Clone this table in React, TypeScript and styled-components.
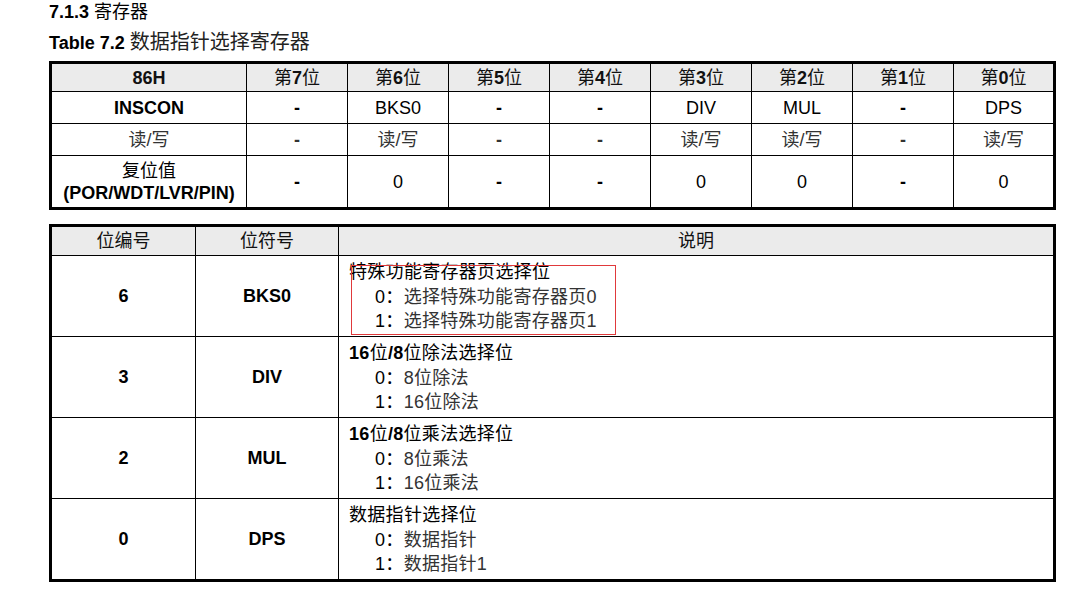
import React from 'react';
import styled, { createGlobalStyle } from 'styled-components';

const GlobalStyle = createGlobalStyle`
  body {
    margin: 0;
    background: #fff;
    font-family: "Liberation Sans", "Noto Sans CJK SC", sans-serif;
    color: #000;
  }
`;

const regHeader = ['第7位', '第6位', '第5位', '第4位', '第3位', '第2位', '第1位', '第0位'];
const regNames = ['-', 'BKS0', '-', '-', 'DIV', 'MUL', '-', 'DPS'];
const regAccess = ['-', '读/写', '-', '-', '读/写', '读/写', '-', '读/写'];
const regReset = ['-', '0', '-', '-', '0', '0', '-', '0'];

interface BitInfo {
  bit: string;
  name: string;
  title: React.ReactNode;
  options: [string, string][];
  marked?: boolean;
}

const bits: BitInfo[] = [
  {
    bit: '6',
    name: 'BKS0',
    title: '特殊功能寄存器页选择位',
    options: [['0', '选择特殊功能寄存器页0'], ['1', '选择特殊功能寄存器页1']],
    marked: true,
  },
  {
    bit: '3',
    name: 'DIV',
    title: (<><b>16</b>位<b>/8</b>位除法选择位</>),
    options: [['0', '8位除法'], ['1', '16位除法']],
  },
  {
    bit: '2',
    name: 'MUL',
    title: (<><b>16</b>位<b>/8</b>位乘法选择位</>),
    options: [['0', '8位乘法'], ['1', '16位乘法']],
  },
  {
    bit: '0',
    name: 'DPS',
    title: '数据指针选择位',
    options: [['0', '数据指针'], ['1', '数据指针1']],
  },
];

// digits in the header row are set bold, the CJK around them is not
function boldDigits(text: string) {
  return text.split(/(\d+)/).map((part, i) => (/\d/.test(part) ? <b key={i}>{part}</b> : part));
}

export default function App() {
  return (
    <Page>
      <GlobalStyle />
      <Heading><b>7.1.3</b> 寄存器</Heading>
      <Caption><b>Table 7.2</b> <CaptionText>数据指针选择寄存器</CaptionText></Caption>

      <RegTable>
        <colgroup>
          <col style={{ width: 196 }} />
          {regHeader.map((h) => <col key={h} />)}
        </colgroup>
        <tbody>
          <tr>
            <HeadCell $height={27}><b>86H</b></HeadCell>
            {regHeader.map((h) => <HeadCell key={h} $height={27}>{boldDigits(h)}</HeadCell>)}
          </tr>
          <tr>
            <Cell $height={31} $bold>INSCON</Cell>
            {regNames.map((v, i) => <Cell key={i} $height={31} $bold={v === '-'}>{v}</Cell>)}
          </tr>
          <tr>
            <Cell $height={31} $soft>读/写</Cell>
            {regAccess.map((v, i) => <Cell key={i} $height={31} $soft $bold={v === '-'}>{v}</Cell>)}
          </tr>
          <tr>
            <Cell $height={51}>
              复位值<br /><b>(POR/WDT/LVR/PIN)</b>
            </Cell>
            {regReset.map((v, i) => <Cell key={i} $height={51} $bold={v === '-'}>{v}</Cell>)}
          </tr>
        </tbody>
      </RegTable>

      <BitTable>
        <colgroup>
          <col style={{ width: 145 }} />
          <col style={{ width: 143 }} />
          <col />
        </colgroup>
        <tbody>
          <tr>
            <HeadCell $height={28}>位编号</HeadCell>
            <HeadCell $height={28}>位符号</HeadCell>
            <HeadCell $height={28}>说明</HeadCell>
          </tr>
          {bits.map((b) => (
            <tr key={b.name}>
              <Cell $height={80} $bold>{b.bit}</Cell>
              <Cell $height={80} $bold>{b.name}</Cell>
              <DescCell>
                <Desc>
                  {b.marked && <Marker />}
                  <DescTitle>{b.title}</DescTitle>
                  {b.options.map(([k, text]) => (
                    <Option key={k}>
                      {k}：<OptionText>{text}</OptionText>
                    </Option>
                  ))}
                </Desc>
              </DescCell>
            </tr>
          ))}
        </tbody>
      </BitTable>
    </Page>
  );
}

const Page = styled.div`
  padding: 0 0 0 49px;
  width: 1007px;
`;

const Heading = styled.div`
  font-size: 18px;
  line-height: 24px;
`;

const Caption = styled.div`
  font-size: 18px;
  line-height: 24px;
  margin-top: 6px;
`;

const CaptionText = styled.span`
  font-size: 20px;
  color: #222;
`;

const RegTable = styled.table`
  width: 1007px;
  margin-top: 6px;
  border-collapse: collapse;
  table-layout: fixed;
  border: 3px solid #000;
`;

const BitTable = styled(RegTable)`
  margin-top: 14px;
`;

const HeadCell = styled.td<{ $height: number }>`
  height: ${(p) => p.$height}px;
  padding: 0;
  background: #ebebeb;
  border: 1px solid #000;
  text-align: center;
  vertical-align: middle;
  font-size: 18px;
  line-height: 22px;
  color: #111;
`;

const Cell = styled.td<{ $height: number; $bold?: boolean; $soft?: boolean }>`
  height: ${(p) => p.$height}px;
  padding: 0;
  border: 1px solid #000;
  text-align: center;
  vertical-align: middle;
  font-size: 18px;
  line-height: 22px;
  font-weight: ${(p) => (p.$bold ? 700 : 400)};
  color: ${(p) => (p.$soft ? '#333' : '#000')};
`;

const DescCell = styled.td`
  padding: 4px 0 0 10px;
  border: 1px solid #000;
  vertical-align: top;
  font-size: 18px;
  line-height: 24.5px;
  letter-spacing: 0.3px;
`;

const Desc = styled.div`
  position: relative;
`;

// red annotation box drawn over the first description in the source document
const Marker = styled.div`
  position: absolute;
  left: 2px;
  top: 5px;
  width: 265px;
  height: 70px;
  box-sizing: border-box;
  border: 1px solid #e0393b;
  pointer-events: none;
`;

const DescTitle = styled.div`
  color: #000;
`;

const Option = styled.div`
  padding-left: 26px;
  color: #000;
`;

const OptionText = styled.span`
  color: #333;
`;
